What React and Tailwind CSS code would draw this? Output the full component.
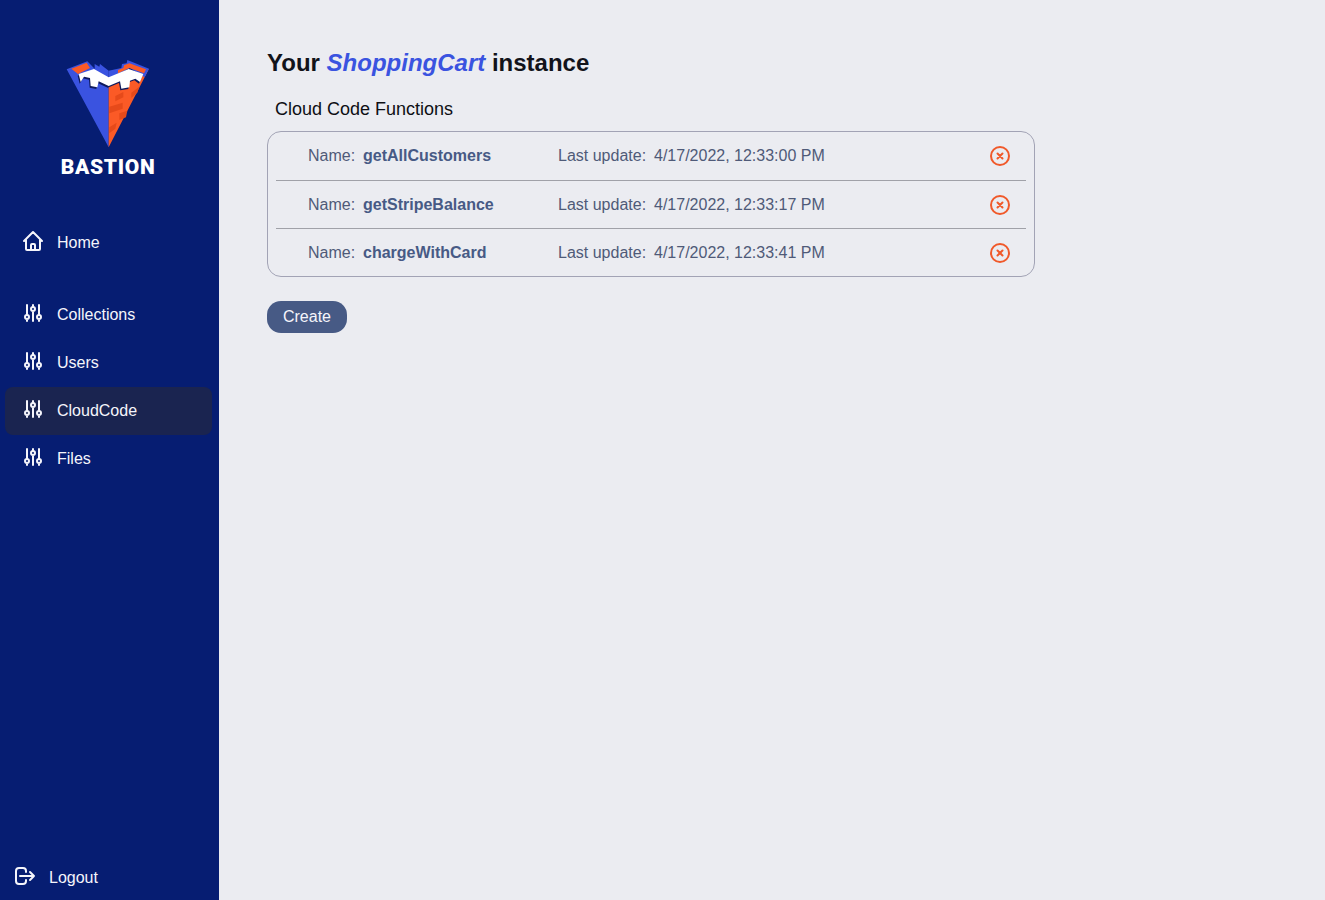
import { HiOutlineAdjustments, HiOutlineHome, HiOutlineLogout } from 'react-icons/hi'

const navItems = [
  { label: 'Collections' },
  { label: 'Users' },
  { label: 'CloudCode', active: true },
  { label: 'Files' },
]

const functions = [
  { name: 'getAllCustomers', updated: '4/17/2022, 12:33:00 PM', height: 'h-[49px]' },
  { name: 'getStripeBalance', updated: '4/17/2022, 12:33:17 PM', height: 'h-[48px]' },
  { name: 'chargeWithCard', updated: '4/17/2022, 12:33:41 PM', height: 'h-[47px]' },
]

const band =
  'M86 86 L132 71 L176 96 L236 71 L280 86 L270 110 L256 100 L240 106 L238 126 L214 130 L210 108 L176 122 L146 108 L142 126 L122 122 L120 98 L102 94 L92 110 Z'

function Logo() {
  return (
    <svg width="84" height="88" viewBox="48 44 252 264">
      {/* left and right faces */}
      <path d="M50 72 L112 48 L134 70 L176 100 L176 306 Z" fill="#3a53e0" />
      <path d="M176 306 L176 100 L280 84 L297 70 Z" fill="#fb5a26" />
      {/* inner walls */}
      <path d="M64 70 L110 52 L120 68 L84 86 Z" fill="#fb5a26" />
      <path d="M232 44 L297 70 L284 96 L240 68 L176 100 L176 76 L214 68 L216 56 L230 54 Z" fill="#3a53e0" />
      <path d="M134 56 L148 64 L150 56 L176 76 L176 100 L134 76 Z" fill="#3a53e0" />
      <path d="M238 54 L288 72 L282 84 L238 68 L204 84 L204 74 L220 68 L222 60 Z" fill="#fb5a26" />
      {/* battlements */}
      <path d={band} fill="#0e1a5c" transform="translate(-3 5)" />
      <path d={band} fill="#ffffff" />
      {/* bricks */}
      <path d="M196 152 L220 140 L220 156 L196 168 Z M178 184 L218 172 L218 190 L178 204 Z M244 142 L268 124 L262 142 L244 158 Z M208 204 L232 196 L228 216 L208 224 Z M178 246 L200 232 L196 250 L178 264 Z" fill="#e64a1a" />
    </svg>
  )
}

function RemoveIcon() {
  return (
    <svg width="24" height="24" viewBox="0 0 24 24" fill="none" stroke="currentColor" strokeWidth="2" strokeLinecap="round" className="text-[#f0592a]">
      <circle cx="12" cy="12" r="9" />
      <path d="M9.5 9.5l5 5m0-5l-5 5" />
    </svg>
  )
}

export default function App() {
  return (
    <div className="flex min-h-screen bg-[#ebecf1] font-['Liberation_Sans',sans-serif]">
      <aside className="flex h-[900px] w-[219px] shrink-0 flex-col bg-[#061d72] text-[#f5f5fb]">
        <div className="flex flex-col items-center pt-[60px] pr-[3px]">
          <Logo />
          <p className="mt-[7px] font-['Roboto',sans-serif] text-[21px] leading-6 font-black tracking-[0.7px] text-white">BASTION</p>
        </div>

        <nav className="mt-[40px] flex flex-1 flex-col pr-[7px] pl-[5px]">
          <a className="flex h-12 items-center gap-3 rounded-lg pl-4 text-base">
            <HiOutlineHome size={24} className="-mt-1 shrink-0" />
            <span>Home</span>
          </a>
          <div className="mt-6 flex flex-col">
            {navItems.map(({ label, active }) => (
              <a
                key={label}
                className={[
                  'flex h-12 items-center gap-3 rounded-lg pl-4 text-base',
                  active ? 'bg-[#1a2450]' : '',
                ].join(' ')}
              >
                <HiOutlineAdjustments size={24} className="-mt-1 shrink-0" />
                <span>{label}</span>
              </a>
            ))}
          </div>
        </nav>

        <button className="mb-[3px] flex h-10 items-center gap-3 pl-[13px] text-left text-base">
          <HiOutlineLogout size={24} className="-mt-[2px] shrink-0" />
          <span className="mt-[2px]">Logout</span>
        </button>
      </aside>

      <main className="flex-1 pt-12 pl-12">
        <h1 className="text-2xl leading-[30px] font-bold text-[#12131a]">
          Your <em className="text-[#3a53e0]">ShoppingCart</em> instance
        </h1>
        <p className="mt-[17px] ml-2 text-lg leading-7 text-[#0e0f14]">Cloud Code Functions</p>

        <div className="mt-2 w-[768px] rounded-[14px] border border-[#a2a3b5] px-2">
          {functions.map(({ name, updated, height }, i) => (
            <div
              key={name}
              className={[
                'flex items-center pr-[14px] pl-8 text-base text-[#4f5a78]',
                height,
                i < functions.length - 1 ? 'border-b border-[#a0a1a8]' : '',
              ].join(' ')}
            >
              <span className="w-[55px]">Name:</span>
              <span className="w-[195px] font-bold text-[#475a85]">{name}</span>
              <span className="w-[96px]">Last update:</span>
              <span className="flex-1">{updated}</span>
              <RemoveIcon />
            </div>
          ))}
        </div>

        <button className="mt-6 h-8 w-20 rounded-[14px] bg-[#475a85] text-base text-[#f5f5fb]">Create</button>
      </main>
    </div>
  )
}
